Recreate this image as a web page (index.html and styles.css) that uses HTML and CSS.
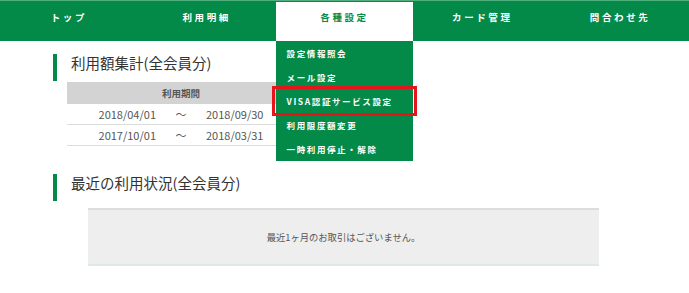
FILE: index.html
```html
<!DOCTYPE html>
<html lang="ja">
<head>
    <meta charset="UTF-8">
    <meta name="viewport" content="width=device-width, initial-scale=1.0">
    <title>各種設定</title>
    <link rel="stylesheet" href="styles.css">
</head>
<body>

    <nav class="gnav">
        <a class="gnav-item" href="#">トップ</a>
        <a class="gnav-item" href="#">利用明細</a>
        <div class="gnav-item active">
            各種設定
            <!-- dropdown menu -->
            <ul class="submenu">
                <li>設定情報照会</li>
                <li>メール設定</li>
                <li class="marked">VISA認証サービス設定</li>
                <li>利用限度額変更</li>
                <li>一時利用停止・解除</li>
            </ul>
        </div>
        <a class="gnav-item" href="#">カード管理</a>
        <a class="gnav-item" href="#">問合わせ先</a>
    </nav>

    <div class="content">
        <h2 class="heading">利用額集計(全会員分)</h2>
        <div class="period-table">
            <div class="period-head">利用期間</div>
            <div class="period-row">
                <span class="from">2018/04/01</span>
                <span class="tilde">～</span>
                <span class="to">2018/09/30</span>
            </div>
            <div class="period-row">
                <span class="from">2017/10/01</span>
                <span class="tilde">～</span>
                <span class="to">2018/03/31</span>
            </div>
        </div>

        <h2 class="heading second">最近の利用状況(全会員分)</h2>
        <div class="notice">最近1ヶ月のお取引はございません。</div>
    </div>

</body>
</html>
```
FILE: styles.css
```css
* {
    margin: 0;
    padding: 0;
    box-sizing: border-box;
}

body {
    font-family: 'Noto Sans CJK JP', 'Noto Sans', sans-serif;
    background-color: #fff;
    color: #333;
    width: 689px;
    height: 293px;
    overflow: hidden;
}

/* global nav */
.gnav {
    display: grid;
    grid-template-columns: repeat(5, 1fr);
    height: 41px;
    background-color: #038a48;
    border-top: 1px solid #4fb07d;
}

.gnav-item {
    position: relative;
    display: block;
    text-align: center;
    color: #fff;
    text-decoration: none;
    font-size: 9.5px;
    font-weight: bold;
    letter-spacing: 2.6px;
    line-height: 32px;
}

.gnav-item.active {
    background-color: #fff;
    color: #038a48;
    margin-top: 1px;
    line-height: 30px;
}

.submenu {
    position: absolute;
    top: 39px;
    left: 0;
    right: 0;
    list-style: none;
    background-color: #038a48;
    text-align: left;
    z-index: 2;
}

.submenu li {
    color: #fff;
    font-size: 8.5px;
    letter-spacing: 1.6px;
    line-height: 24px;
    height: 24px;
    padding-left: 11px;
}

.submenu li.marked {
    margin: 0 -1px;
    padding-left: 12px;
    outline: 3px solid #e8141c;
}

/* main */
.content {
    padding: 13px 0 0 53px;
}

.heading {
    border-left: 4px solid #038a48;
    padding-left: 14px;
    font-size: 14.5px;
    font-weight: 400;
    line-height: 18px;
    height: 27px;
    color: #333;
}

.heading.second {
    margin-top: 28px;
}

.period-table {
    width: 228px;
    margin: 1px 0 0 14px;
    font-size: 11px;
    color: #555;
}

.period-head {
    background-color: #d3d3d3;
    text-align: center;
    font-size: 9.5px;
    font-weight: bold;
    color: #555;
    height: 22px;
    line-height: 22px;
}

.period-row {
    display: grid;
    grid-template-columns: 1fr 50px 1fr;
    height: 21px;
    line-height: 20px;
    border-bottom: 1px solid #dcdcdc;
}

.period-row .from {
    text-align: right;
}

.period-row .tilde {
    text-align: center;
}

.period-row .to {
    text-align: left;
}

.notice {
    width: 511px;
    height: 58px;
    margin: 7px 0 0 35px;
    background-color: #eeeeee;
    border-top: 2px solid #dddddd;
    border-bottom: 2px solid #dde8e8;
    text-align: center;
    font-size: 9.3px;
    color: #555;
    line-height: 54px;
}
```
